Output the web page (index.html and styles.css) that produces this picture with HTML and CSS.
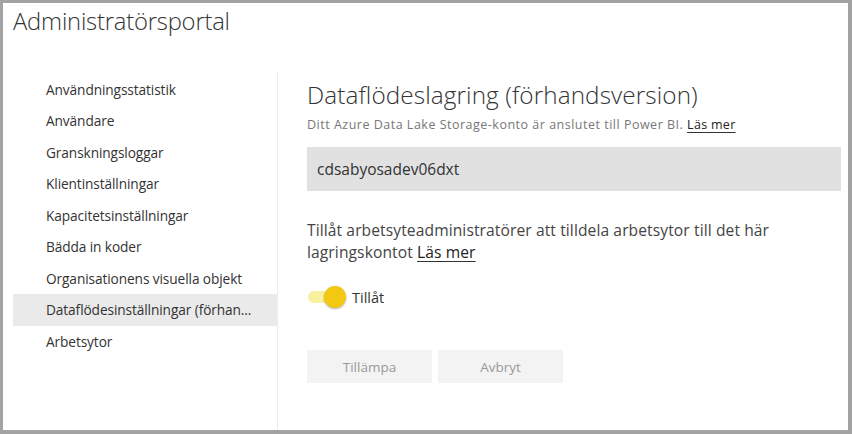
FILE: index.html
```html
<!DOCTYPE html>
<html lang="sv">
<head>
<meta charset="utf-8">
<title>Administratörsportal</title>
<link rel="stylesheet" href="styles.css">
</head>
<body>
<div class="frame">
  <header class="top">
    <h1 class="title">Administratörsportal</h1>
  </header>
  <div class="main">
    <nav class="nav">
      <div class="nav-item">Användningsstatistik</div>
      <div class="nav-item">Användare</div>
      <div class="nav-item">Granskningsloggar</div>
      <div class="nav-item">Klientinställningar</div>
      <div class="nav-item">Kapacitetsinställningar</div>
      <div class="nav-item">Bädda in koder</div>
      <div class="nav-item">Organisationens visuella objekt</div>
      <div class="nav-item active">Dataflödesinställningar (förhan...</div>
      <div class="nav-item">Arbetsytor</div>
    </nav>
    <section class="content">
      <h2 class="heading">Dataflödeslagring (förhandsversion)</h2>
      <p class="sub">Ditt Azure Data Lake Storage-konto är anslutet till Power BI. <a class="link" href="#">Läs mer</a></p>
      <div class="account">cdsabyosadev06dxt</div>
      <p class="desc">Tillåt arbetsyteadministratörer att tilldela arbetsytor till det här lagringskontot <a class="link" href="#">Läs mer</a></p>
      <div class="toggle-row">
        <span class="toggle"><span class="track"></span><span class="knob"></span></span>
        <span class="toggle-label">Tillåt</span>
      </div>
      <div class="buttons">
        <button class="btn">Tillämpa</button>
        <button class="btn">Avbryt</button>
      </div>
    </section>
  </div>
</div>
</body>
</html>
```

FILE: styles.css
```css
* { box-sizing: border-box; }
html, body { margin: 0; padding: 0; }
body {
  background: #a3a3a3;
  width: 852px;
  height: 434px;
  padding: 3px 4px 4px 3px;
  font-family: "Open Sans", "Noto Sans", sans-serif;
  color: #333;
  overflow: hidden;
}
.frame {
  background: #fff;
  width: 845px;
  height: 427px;
  display: flex;
  flex-direction: column;
}
.top {
  height: 69px;
  padding: 2px 0 0 10px;
}
.title {
  margin: 0;
  font-weight: 300;
  font-size: 23.8px;
  line-height: 32px;
  color: #333;
  letter-spacing: -0.2px;
}
.main {
  flex: 1;
  display: flex;
}
.nav {
  width: 275px;
  border-right: 1px solid #ececec;
  padding: 1.5px 0 0 10px;
}
.nav-item {
  height: 31.5px;
  line-height: 31.5px;
  padding-left: 33px;
  font-size: 13.7px;
  color: #333;
  white-space: nowrap;
  letter-spacing: -0.1px;
}
.nav-item.active {
  background: #eaeaea;
}
.content {
  flex: 1;
  padding: 0 7px 0 29px;
}
.heading {
  margin: 7px 0 0;
  font-weight: 300;
  font-size: 24.3px;
  line-height: 32px;
  color: #333;
  letter-spacing: 0.1px;
}
.sub {
  margin: 5px 0 0;
  font-size: 12.5px;
  line-height: 18px;
  color: #777;
  letter-spacing: 0.5px;
}
.sub .link {
  letter-spacing: 0.3px;
}
.link {
  color: #222;
  text-decoration: underline;
  text-decoration-color: #333;
  text-underline-offset: 3px;
}
.account {
  margin-top: 13px;
  height: 44px;
  line-height: 44px;
  background: #e1e1e1;
  padding-left: 10px;
  font-size: 15.5px;
  color: #333;
}
.desc {
  margin: 28px 0 0;
  font-size: 15.6px;
  line-height: 22px;
  color: #444;
  letter-spacing: 0.1px;
}
.toggle-row {
  margin-top: 22px;
  height: 24px;
  display: flex;
  align-items: center;
}
.toggle {
  position: relative;
  width: 39px;
  height: 24px;
  margin-left: 1px;
}
.track {
  position: absolute;
  left: 0;
  top: 6px;
  width: 36px;
  height: 12px;
  border-radius: 6px;
  background: #f9f0a0;
}
.knob {
  position: absolute;
  left: 16px;
  top: 1px;
  width: 22px;
  height: 22px;
  border-radius: 50%;
  background: #f2c811;
  box-shadow: 0 1px 2px rgba(0,0,0,0.3);
}
.toggle-label {
  margin-left: 5px;
  font-size: 14.5px;
  color: #333;
}
.buttons {
  margin-top: 41px;
  display: flex;
  gap: 6px;
}
.btn {
  width: 125px;
  height: 33px;
  border: none;
  background: #f3f3f3;
  color: #999;
  font-family: inherit;
  font-size: 13.5px;
  padding: 0;
}
```
